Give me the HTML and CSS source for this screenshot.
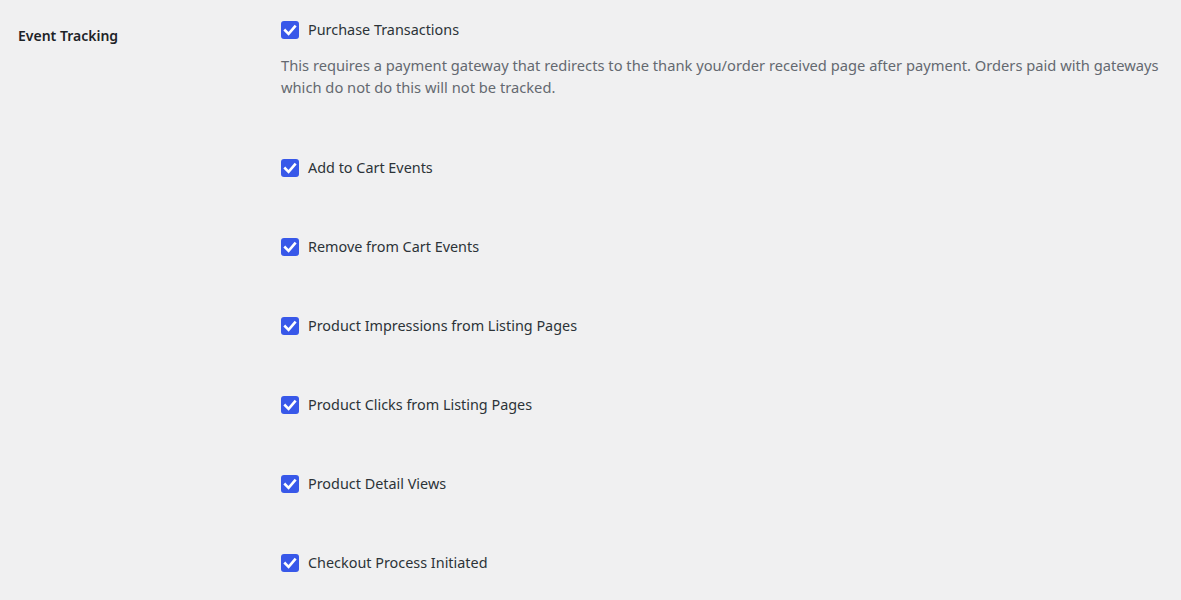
FILE: index.html
```html
<!DOCTYPE html>
<html lang="en">
<head>
  <meta charset="UTF-8">
  <meta name="viewport" content="width=device-width, initial-scale=1.0">
  <title>Event Tracking Settings</title>
  <link rel="stylesheet" href="styles.css">
</head>
<body>
  <div class="form-table">
    <div class="row-head">Event Tracking</div>

    <div class="field-list">
      <div class="field">
        <label class="check-row">
          <span class="checkbox"><svg viewBox="0 0 18 18"><polyline points="4.2,9.4 7.6,12.8 13.8,5.6"/></svg></span>
          Purchase Transactions
        </label>
        <p class="description">This requires a payment gateway that redirects to the thank you/order received page after payment. Orders paid with gateways which do not do this will not be tracked.</p>
      </div>

      <div class="field">
        <label class="check-row">
          <span class="checkbox"><svg viewBox="0 0 18 18"><polyline points="4.2,9.4 7.6,12.8 13.8,5.6"/></svg></span>
          Add to Cart Events
        </label>
      </div>

      <div class="field">
        <label class="check-row">
          <span class="checkbox"><svg viewBox="0 0 18 18"><polyline points="4.2,9.4 7.6,12.8 13.8,5.6"/></svg></span>
          Remove from Cart Events
        </label>
      </div>

      <div class="field">
        <label class="check-row">
          <span class="checkbox"><svg viewBox="0 0 18 18"><polyline points="4.2,9.4 7.6,12.8 13.8,5.6"/></svg></span>
          Product Impressions from Listing Pages
        </label>
      </div>

      <div class="field">
        <label class="check-row">
          <span class="checkbox"><svg viewBox="0 0 18 18"><polyline points="4.2,9.4 7.6,12.8 13.8,5.6"/></svg></span>
          Product Clicks from Listing Pages
        </label>
      </div>

      <div class="field">
        <label class="check-row">
          <span class="checkbox"><svg viewBox="0 0 18 18"><polyline points="4.2,9.4 7.6,12.8 13.8,5.6"/></svg></span>
          Product Detail Views
        </label>
      </div>

      <div class="field">
        <label class="check-row">
          <span class="checkbox"><svg viewBox="0 0 18 18"><polyline points="4.2,9.4 7.6,12.8 13.8,5.6"/></svg></span>
          Checkout Process Initiated
        </label>
      </div>
    </div>
  </div>
</body>
</html>
```

FILE: styles.css
```css
body {
  margin: 0;
  background: #f0f0f1;
  color: #3c434a;
  font-family: "Noto Sans", Roboto, sans-serif;
  font-size: 14.4px;
  overflow: hidden;
}

.form-table {
  display: grid;
  grid-template-columns: 263px 1fr;
  padding: 0 10px 0 18px;
}

.row-head {
  padding-top: 26px;
  line-height: 20px;
  font-size: 14px;
  font-weight: 600;
  color: #1d2327;
}

.field-list {
  display: flex;
  flex-direction: column;
  gap: 61px;
  padding-top: 21px;
}

.check-row {
  display: flex;
  align-items: center;
  gap: 9px;
  height: 18px;
  line-height: 18px;
  color: #2c3338;
  cursor: pointer;
}

.checkbox {
  display: inline-flex;
  width: 18px;
  height: 18px;
  flex: none;
  border-radius: 3px;
  background: #3858e9;
}

.checkbox svg {
  width: 18px;
  height: 18px;
  fill: none;
  stroke: #fff;
  stroke-width: 2.6;
  stroke-linecap: square;
}

.description {
  margin: 15px 0 0;
  font-size: 14.7px;
  line-height: 22px;
  color: #646970;
}
```
